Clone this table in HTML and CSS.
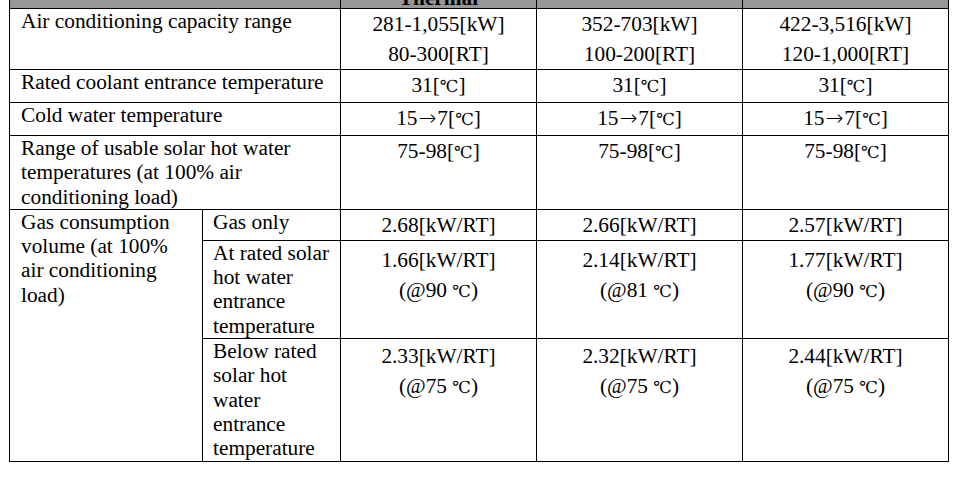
FILE: index.html
```html
<!DOCTYPE html>
<html lang="en">
<head>
    <meta charset="UTF-8">
    <meta name="viewport" content="width=device-width, initial-scale=1.0">
    <title>Solar Absorption Chiller Specifications</title>
    <link rel="stylesheet" href="styles.css">
</head>
<body>
    <!-- Specification table (top of page cut off) -->
    <table class="spec">
        <colgroup>
            <col class="col-label">
            <col class="col-sub">
            <col class="col-first">
            <col class="col-value">
            <col class="col-value">
        </colgroup>
        <thead>
            <tr class="head">
                <th colspan="2"></th>
                <th>Thermal</th>
                <th></th>
                <th></th>
            </tr>
        </thead>
        <tbody>
            <tr class="row-capacity">
                <td colspan="2" class="label">Air conditioning capacity range</td>
                <td class="value">281-1,055[kW]<br>80-300[RT]</td>
                <td class="value">352-703[kW]<br>100-200[RT]</td>
                <td class="value">422-3,516[kW]<br>120-1,000[RT]</td>
            </tr>
            <tr class="row-single">
                <td colspan="2" class="label">Rated coolant entrance temperature</td>
                <td class="value">31[<span class="deg">℃</span>]</td>
                <td class="value">31[<span class="deg">℃</span>]</td>
                <td class="value">31[<span class="deg">℃</span>]</td>
            </tr>
            <tr class="row-single2">
                <td colspan="2" class="label">Cold water temperature</td>
                <td class="value">15<span class="arrow">→</span>7[<span class="deg">℃</span>]</td>
                <td class="value">15<span class="arrow">→</span>7[<span class="deg">℃</span>]</td>
                <td class="value">15<span class="arrow">→</span>7[<span class="deg">℃</span>]</td>
            </tr>
            <tr class="row-range">
                <td colspan="2" class="label">Range of usable solar hot water temperatures (at 100% air conditioning load)</td>
                <td class="value">75-98[<span class="deg">℃</span>]</td>
                <td class="value">75-98[<span class="deg">℃</span>]</td>
                <td class="value">75-98[<span class="deg">℃</span>]</td>
            </tr>
            <tr class="row-gas">
                <td rowspan="3" class="label">Gas consumption volume (at 100% air conditioning load)</td>
                <td class="label sub">Gas only</td>
                <td class="value">2.68[kW/RT]</td>
                <td class="value">2.66[kW/RT]</td>
                <td class="value">2.57[kW/RT]</td>
            </tr>
            <tr class="row-rated">
                <td class="label sub">At rated solar hot water entrance temperature</td>
                <td class="value">1.66[kW/RT]<br>(@90 <span class="deg">℃</span>)</td>
                <td class="value">2.14[kW/RT]<br>(@81 <span class="deg">℃</span>)</td>
                <td class="value">1.77[kW/RT]<br>(@90 <span class="deg">℃</span>)</td>
            </tr>
            <tr class="row-below">
                <td class="label sub">Below rated solar hot water entrance temperature</td>
                <td class="value">2.33[kW/RT]<br>(@75 <span class="deg">℃</span>)</td>
                <td class="value">2.32[kW/RT]<br>(@75 <span class="deg">℃</span>)</td>
                <td class="value">2.44[kW/RT]<br>(@75 <span class="deg">℃</span>)</td>
            </tr>
        </tbody>
    </table>
</body>
</html>
```

FILE: styles.css
```css
body {
    margin: 0;
    padding: 0 0 0 9px;
    background-color: #ffffff;
    color: #000000;
    font-family: "Liberation Serif", "Noto Sans CJK JP", serif;
    font-size: 21.33px;
}

/* Main table */
.spec {
    width: 940px;
    margin-top: -21px;
    border-collapse: collapse;
    table-layout: fixed;
}

.col-label {
    width: 193px;
}

.col-sub {
    width: 138px;
}

.col-first {
    width: 196px;
}

.col-value {
    width: 206px;
}

.spec th,
.spec td {
    border: 1px solid #000000;
    padding: 0;
    vertical-align: top;
}

/* Grey header, mostly above the visible area */
.head {
    height: 29px;
}

.spec .head th {
    background-color: #979797;
    vertical-align: bottom;
    line-height: 20px;
    font-weight: bold;
}

.spec .label {
    padding: 0 8px 0 11px;
    text-align: left;
    line-height: 24.3px;
}

.spec .sub {
    padding-left: 10px;
}

.spec .value {
    text-align: center;
    line-height: 30px;
}

.deg {
    font-family: "DejaVu Serif", "Noto Sans CJK JP", serif;
    font-size: 0.78em;
}

.arrow {
    font-family: "DejaVu Sans", sans-serif;
    font-weight: 200;
    padding: 0 1px;
}

/* Row heights */
.row-capacity {
    height: 61px;
}

.row-single {
    height: 30px;
}

.row-single2 {
    height: 31px;
}

.row-range {
    height: 73px;
}

.row-gas {
    height: 30px;
}

.row-rated {
    height: 98px;
}

.spec .row-rated .value {
    padding-top: 4px;
}

.row-below {
    height: 122px;
}

.spec .row-below .value {
    padding-top: 2px;
}
```
